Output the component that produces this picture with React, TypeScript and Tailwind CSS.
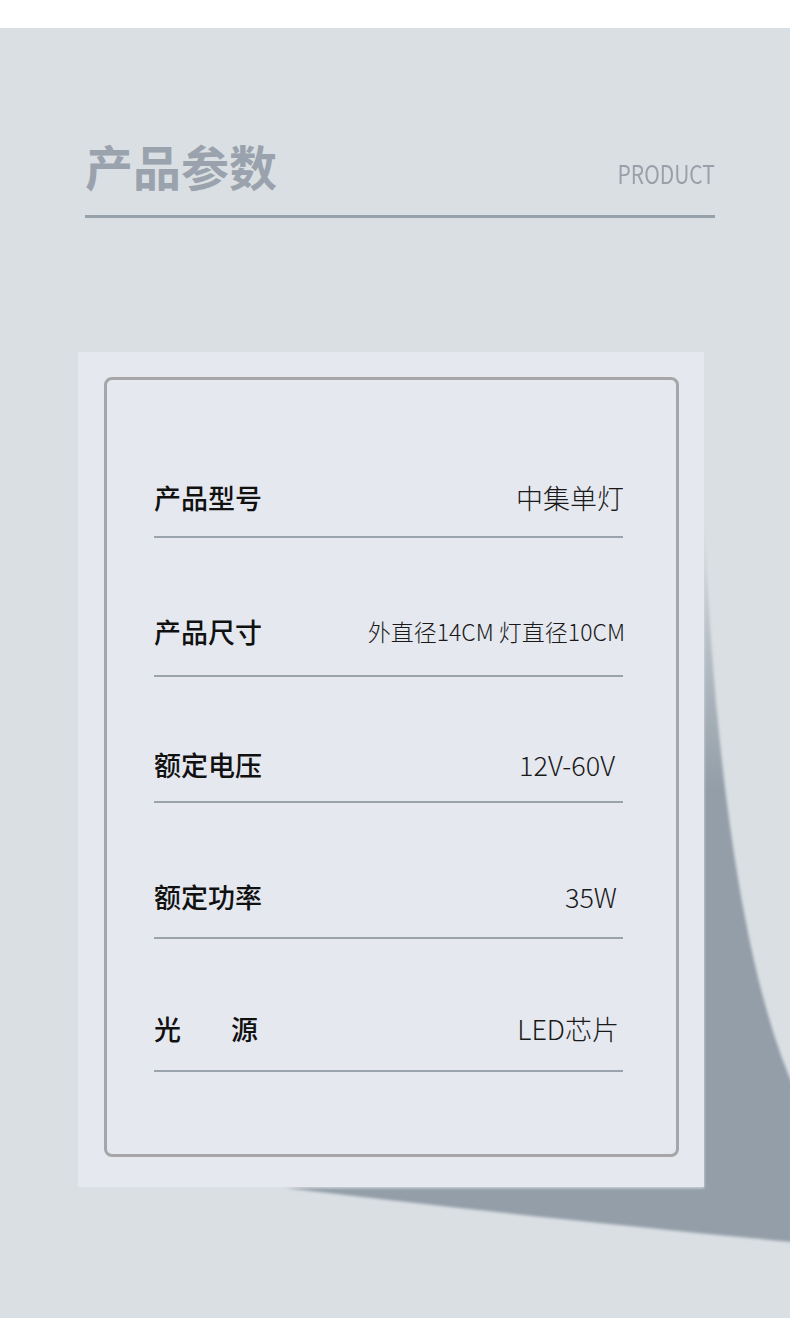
import React from "react";

const font = { fontFamily: '"Noto Sans CJK SC", "Noto Sans", sans-serif' };

type Row = {
  label: React.ReactNode;
  value: string;
  pt: string;
  gap: string;
  valueClass: string;
};

const rows: Row[] = [
  { label: "产品型号", value: "中集单灯", pt: "pt-[102px]", gap: "mt-[24px]", valueClass: "text-[27px] -mr-[1px]" },
  { label: "产品尺寸", value: "外直径14CM 灯直径10CM", pt: "pt-[78px]", gap: "mt-[29px]", valueClass: "text-[23px] -mr-[2px]" },
  { label: "额定电压", value: "12V-60V", pt: "pt-[72px]", gap: "mt-[22px]", valueClass: "text-[27px] mr-[8px]" },
  { label: "额定功率", value: "35W", pt: "pt-[78px]", gap: "mt-[26px]", valueClass: "text-[27px] mr-[6px]" },
  {
    label: (
      <span className="flex gap-[50px]">
        <span>光</span>
        <span>源</span>
      </span>
    ),
    value: "LED芯片",
    pt: "pt-[74px]",
    gap: "mt-[27px]",
    valueClass: "text-[27px] mr-[4px]",
  },
];

function PageShadow() {
  return (
    <svg
      className="absolute left-0 top-0"
      width="790"
      height="1290"
      viewBox="0 0 790 1290"
    >
      <defs>
        <linearGradient id="sh" x1="0" y1="480" x2="0" y2="760" gradientUnits="userSpaceOnUse">
          <stop offset="0" stopColor="#dadfe3" />
          <stop offset="1" stopColor="#939ea8" />
        </linearGradient>
        <filter id="blur" x="-10%" y="-10%" width="120%" height="120%">
          <feGaussianBlur stdDeviation="1.5" />
        </filter>
      </defs>
      <path
        d="M704 480 C 712 700, 738 930, 792 1055 L 792 1214 C 600 1196, 420 1176, 285 1160 L 704 1160 Z"
        fill="url(#sh)"
        filter="url(#blur)"
      />
    </svg>
  );
}

export default function App() {
  return (
    <div className="w-[790px] bg-white pt-[28px] pb-[22px]" style={font}>
      <div className="relative h-[1290px] overflow-hidden bg-[#dadfe3]">
        <PageShadow />

        {/* Header */}
        <div className="relative pl-[85px] pr-[75px] pt-[113px]">
          <div className="flex items-end justify-between">
            <h1 className="text-[48px] font-bold leading-none text-[#9aa3ad]">产品参数</h1>
            <span className="mb-[3px] origin-right scale-x-[0.84] text-[25px] font-normal leading-none text-[#98a1aa]">
              PRODUCT
            </span>
          </div>
          <div className="mt-[26px] h-[3px] bg-[#97a1ab]" />
        </div>

        {/* Spec panel */}
        <div className="relative z-10 ml-[78px] mt-[134px] h-[835px] w-[626px] bg-[#e5e8ef] pl-[26px] pt-[25px]">
          <div className="h-[780px] w-[575px] rounded-[8px] border-[3px] border-[#a6a6a8] pl-[47px] pr-[53px]">
            {rows.map((row, i) => (
              <div key={i} className={row.pt}>
                <div className="flex h-[30px] items-center justify-between">
                  <span className="text-[27px] font-medium leading-none text-[#111111]">{row.label}</span>
                  <span className={`font-light leading-none text-[#1a1a1a] ${row.valueClass}`}>{row.value}</span>
                </div>
                <div className={`h-[2px] bg-[#9aa2ab] ${row.gap}`} />
              </div>
            ))}
          </div>
        </div>
      </div>
    </div>
  );
}
